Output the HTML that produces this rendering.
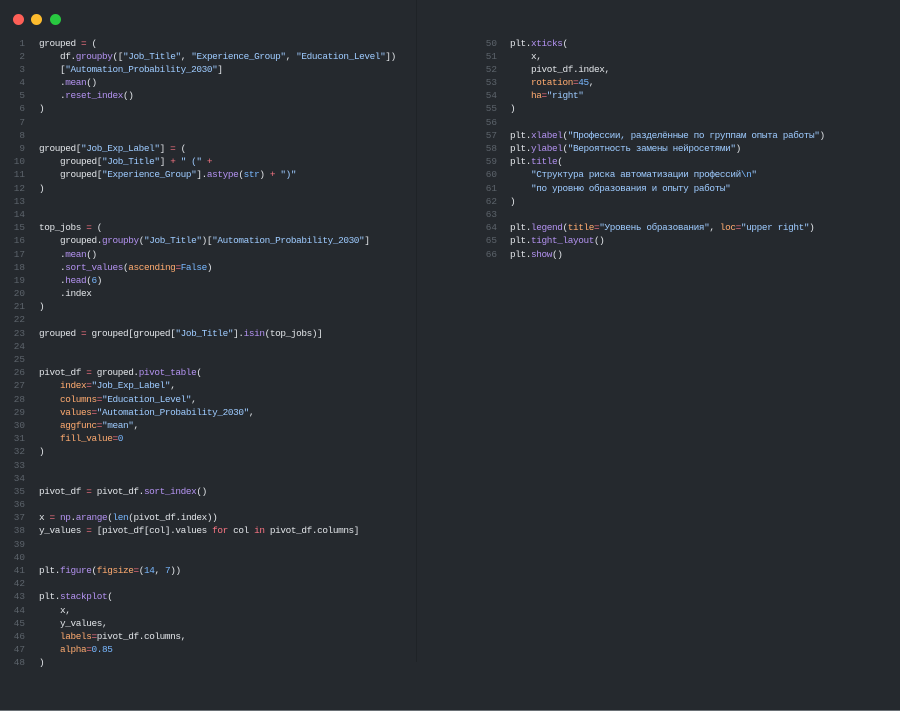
<!DOCTYPE html>
<html><head><meta charset="utf-8"><style>
html,body{margin:0;padding:0;}
body{width:900px;height:711px;background:#25292e;position:relative;overflow:hidden;font-family:"Liberation Mono","DejaVu Sans Mono",monospace;font-size:9.4px;letter-spacing:-0.38px;color:#e1e4e8;}
.dot{position:absolute;top:14px;width:11px;height:11px;border-radius:50%;}
.pane{position:absolute;top:36.5px;}
.l{height:13.19px;line-height:13.19px;white-space:pre;position:relative;}
.n{position:absolute;text-align:right;width:20px;color:#5c636b;letter-spacing:0;}
.c{position:absolute;}
i{display:inline-block;width:21px;}
.k{color:#f97583}.m{color:#b392f0}.s{color:#9ecbff}.p{color:#ffab70}.d{color:#79b8ff}
.div{position:absolute;left:416px;top:0;width:1px;height:662px;background:#1f2327;}
.bot{position:absolute;left:0;bottom:0;width:900px;height:1px;background:#6a7075;}
</style></head><body>
<div class="dot" style="left:13px;background:#fe5f57"></div>
<div class="dot" style="left:31px;background:#febc2e"></div>
<div class="dot" style="left:50px;background:#28c840"></div>
<div class="div"></div>
<div class="bot"></div>
<div class="pane" style="left:5px;width:400px">
<div class="l"><span class="n">1</span><span class="c" style="left:34px">grouped <span class="k">=</span> (</span></div>
<div class="l"><span class="n">2</span><span class="c" style="left:34px"><i></i>df.<span class="m">groupby</span>([<span class="s">"Job_Title"</span>, <span class="s">"Experience_Group"</span>, <span class="s">"Education_Level"</span>])</span></div>
<div class="l"><span class="n">3</span><span class="c" style="left:34px"><i></i>[<span class="s">"Automation_Probability_2030"</span>]</span></div>
<div class="l"><span class="n">4</span><span class="c" style="left:34px"><i></i>.<span class="m">mean</span>()</span></div>
<div class="l"><span class="n">5</span><span class="c" style="left:34px"><i></i>.<span class="m">reset_index</span>()</span></div>
<div class="l"><span class="n">6</span><span class="c" style="left:34px">)</span></div>
<div class="l"><span class="n">7</span></div>
<div class="l"><span class="n">8</span></div>
<div class="l"><span class="n">9</span><span class="c" style="left:34px">grouped[<span class="s">"Job_Exp_Label"</span>] <span class="k">=</span> (</span></div>
<div class="l"><span class="n">10</span><span class="c" style="left:34px"><i></i>grouped[<span class="s">"Job_Title"</span>] <span class="k">+</span> <span class="s">" ("</span> <span class="k">+</span></span></div>
<div class="l"><span class="n">11</span><span class="c" style="left:34px"><i></i>grouped[<span class="s">"Experience_Group"</span>].<span class="m">astype</span>(<span class="d">str</span>) <span class="k">+</span> <span class="s">")"</span></span></div>
<div class="l"><span class="n">12</span><span class="c" style="left:34px">)</span></div>
<div class="l"><span class="n">13</span></div>
<div class="l"><span class="n">14</span></div>
<div class="l"><span class="n">15</span><span class="c" style="left:34px">top_jobs <span class="k">=</span> (</span></div>
<div class="l"><span class="n">16</span><span class="c" style="left:34px"><i></i>grouped.<span class="m">groupby</span>(<span class="s">"Job_Title"</span>)[<span class="s">"Automation_Probability_2030"</span>]</span></div>
<div class="l"><span class="n">17</span><span class="c" style="left:34px"><i></i>.<span class="m">mean</span>()</span></div>
<div class="l"><span class="n">18</span><span class="c" style="left:34px"><i></i>.<span class="m">sort_values</span>(<span class="p">ascending</span><span class="k">=</span><span class="d">False</span>)</span></div>
<div class="l"><span class="n">19</span><span class="c" style="left:34px"><i></i>.<span class="m">head</span>(<span class="d">6</span>)</span></div>
<div class="l"><span class="n">20</span><span class="c" style="left:34px"><i></i>.index</span></div>
<div class="l"><span class="n">21</span><span class="c" style="left:34px">)</span></div>
<div class="l"><span class="n">22</span></div>
<div class="l"><span class="n">23</span><span class="c" style="left:34px">grouped <span class="k">=</span> grouped[grouped[<span class="s">"Job_Title"</span>].<span class="m">isin</span>(top_jobs)]</span></div>
<div class="l"><span class="n">24</span></div>
<div class="l"><span class="n">25</span></div>
<div class="l"><span class="n">26</span><span class="c" style="left:34px">pivot_df <span class="k">=</span> grouped.<span class="m">pivot_table</span>(</span></div>
<div class="l"><span class="n">27</span><span class="c" style="left:34px"><i></i><span class="p">index</span><span class="k">=</span><span class="s">"Job_Exp_Label"</span>,</span></div>
<div class="l"><span class="n">28</span><span class="c" style="left:34px"><i></i><span class="p">columns</span><span class="k">=</span><span class="s">"Education_Level"</span>,</span></div>
<div class="l"><span class="n">29</span><span class="c" style="left:34px"><i></i><span class="p">values</span><span class="k">=</span><span class="s">"Automation_Probability_2030"</span>,</span></div>
<div class="l"><span class="n">30</span><span class="c" style="left:34px"><i></i><span class="p">aggfunc</span><span class="k">=</span><span class="s">"mean"</span>,</span></div>
<div class="l"><span class="n">31</span><span class="c" style="left:34px"><i></i><span class="p">fill_value</span><span class="k">=</span><span class="d">0</span></span></div>
<div class="l"><span class="n">32</span><span class="c" style="left:34px">)</span></div>
<div class="l"><span class="n">33</span></div>
<div class="l"><span class="n">34</span></div>
<div class="l"><span class="n">35</span><span class="c" style="left:34px">pivot_df <span class="k">=</span> pivot_df.<span class="m">sort_index</span>()</span></div>
<div class="l"><span class="n">36</span></div>
<div class="l"><span class="n">37</span><span class="c" style="left:34px">x <span class="k">=</span> <span class="m">np</span>.<span class="m">arange</span>(<span class="d">len</span>(pivot_df.index))</span></div>
<div class="l"><span class="n">38</span><span class="c" style="left:34px">y_values <span class="k">=</span> [pivot_df[col].values <span class="k">for</span> col <span class="k">in</span> pivot_df.columns]</span></div>
<div class="l"><span class="n">39</span></div>
<div class="l"><span class="n">40</span></div>
<div class="l"><span class="n">41</span><span class="c" style="left:34px">plt.<span class="m">figure</span>(<span class="p">figsize</span><span class="k">=</span>(<span class="d">14</span>, <span class="d">7</span>))</span></div>
<div class="l"><span class="n">42</span></div>
<div class="l"><span class="n">43</span><span class="c" style="left:34px">plt.<span class="m">stackplot</span>(</span></div>
<div class="l"><span class="n">44</span><span class="c" style="left:34px"><i></i>x,</span></div>
<div class="l"><span class="n">45</span><span class="c" style="left:34px"><i></i>y_values,</span></div>
<div class="l"><span class="n">46</span><span class="c" style="left:34px"><i></i><span class="p">labels</span><span class="k">=</span>pivot_df.columns,</span></div>
<div class="l"><span class="n">47</span><span class="c" style="left:34px"><i></i><span class="p">alpha</span><span class="k">=</span><span class="d">0.85</span></span></div>
<div class="l"><span class="n">48</span><span class="c" style="left:34px">)</span></div>
</div>
<div class="pane" style="left:477px;width:420px">
<div class="l"><span class="n">50</span><span class="c" style="left:33px">plt.<span class="m">xticks</span>(</span></div>
<div class="l"><span class="n">51</span><span class="c" style="left:33px"><i></i>x,</span></div>
<div class="l"><span class="n">52</span><span class="c" style="left:33px"><i></i>pivot_df.index,</span></div>
<div class="l"><span class="n">53</span><span class="c" style="left:33px"><i></i><span class="p">rotation</span><span class="k">=</span><span class="d">45</span>,</span></div>
<div class="l"><span class="n">54</span><span class="c" style="left:33px"><i></i><span class="p">ha</span><span class="k">=</span><span class="s">"right"</span></span></div>
<div class="l"><span class="n">55</span><span class="c" style="left:33px">)</span></div>
<div class="l"><span class="n">56</span></div>
<div class="l"><span class="n">57</span><span class="c" style="left:33px">plt.<span class="m">xlabel</span>(<span class="s">"Профессии, разделённые по группам опыта работы"</span>)</span></div>
<div class="l"><span class="n">58</span><span class="c" style="left:33px">plt.<span class="m">ylabel</span>(<span class="s">"Вероятность замены нейросетями"</span>)</span></div>
<div class="l"><span class="n">59</span><span class="c" style="left:33px">plt.<span class="m">title</span>(</span></div>
<div class="l"><span class="n">60</span><span class="c" style="left:33px"><i></i><span class="s">"Структура риска автоматизации профессий<span class="d">\n</span>"</span></span></div>
<div class="l"><span class="n">61</span><span class="c" style="left:33px"><i></i><span class="s">"по уровню образования и опыту работы"</span></span></div>
<div class="l"><span class="n">62</span><span class="c" style="left:33px">)</span></div>
<div class="l"><span class="n">63</span></div>
<div class="l"><span class="n">64</span><span class="c" style="left:33px">plt.<span class="m">legend</span>(<span class="p">title</span><span class="k">=</span><span class="s">"Уровень образования"</span>, <span class="p">loc</span><span class="k">=</span><span class="s">"upper right"</span>)</span></div>
<div class="l"><span class="n">65</span><span class="c" style="left:33px">plt.<span class="m">tight_layout</span>()</span></div>
<div class="l"><span class="n">66</span><span class="c" style="left:33px">plt.<span class="m">show</span>()</span></div>
</div>
</body></html>
